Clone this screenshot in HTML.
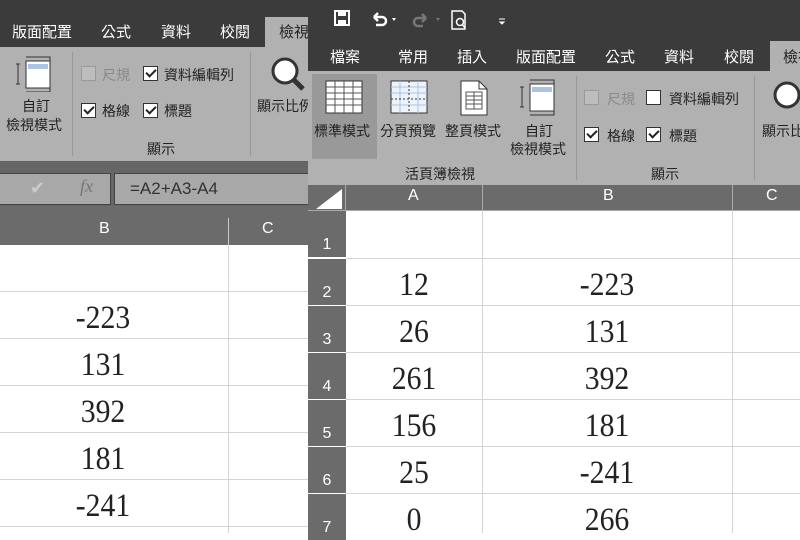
<!DOCTYPE html><html><head><meta charset="utf-8"><style>
*{margin:0;padding:0;box-sizing:border-box}
body{width:800px;height:533px;overflow:hidden;position:relative;background:#fff;font-family:"Liberation Sans","Noto Sans CJK TC",sans-serif}
.a{position:absolute}
.t{position:absolute;color:#fff;font-size:15px;white-space:nowrap}
.k{position:absolute;color:#222;font-size:14px;white-space:nowrap}
.cb{position:absolute;width:15px;height:15px;border:1px solid #333;background:#fff}
.cb.c::after{content:"";position:absolute;left:4px;top:0px;width:4px;height:8px;border:solid #222;border-width:0 2px 2px 0;transform:rotate(45deg)}
.cb.d{border-color:#999;background:#bdbdbd}
.cb.d::after{border-color:#999}
.n{position:absolute;font-family:"Liberation Serif",serif;font-size:33px;color:#222;text-align:center;transform:scaleX(0.9)}
.hl{position:absolute;height:1px;background:#d4d4d4}
.vl{position:absolute;width:1px;background:#d4d4d4}
.rh{position:absolute;left:308px;width:38px;height:46px;background:#6b6b6b;color:#fff;font-size:16px;text-align:center;padding-top:25px}
</style></head><body>
<!-- LEFT -->
<div class="a" style="left:0;top:0;width:308px;height:47px;background:#3b3b3b"></div>
<div class="a" style="left:265px;top:17px;width:43px;height:30px;background:#b1b1b1"></div>
<div class="t" style="left:12px;top:21px">版面配置</div>
<div class="t" style="left:101px;top:21px">公式</div>
<div class="t" style="left:161px;top:21px">資料</div>
<div class="t" style="left:220px;top:21px">校閱</div>
<div class="k" style="left:279px;top:21px;font-size:15px">檢視</div>
<div class="a" style="left:0;top:47px;width:308px;height:114px;background:#b1b1b1"></div>
<div class="a" style="left:72px;top:52px;width:1px;height:104px;background:#999"></div>
<div class="a" style="left:250px;top:52px;width:1px;height:104px;background:#999"></div>
<svg class="a" style="left:16px;top:56px" width="40" height="36"><rect x="10" y="5" width="24" height="27" fill="#fff" stroke="#333"/><rect x="12" y="8" width="20" height="5" fill="#a9c4e4"/><path d="M2 8v20M0 8h4M0 28h4M10 1h24v4M34 32v4H10" stroke="#333" fill="none"/></svg>
<div class="k" style="left:22px;top:96px">自訂</div>
<div class="k" style="left:6px;top:115px">檢視模式</div>
<div class="cb d" style="left:81px;top:66px"></div><div class="k" style="left:102px;top:65px;color:#8a8a8a">尺規</div>
<div class="cb c" style="left:143px;top:66px"></div><div class="k" style="left:164px;top:65px">資料編輯列</div>
<div class="cb c" style="left:81px;top:103px"></div><div class="k" style="left:102px;top:101px">格線</div>
<div class="cb c" style="left:143px;top:103px"></div><div class="k" style="left:164px;top:101px">標題</div>
<div class="k" style="left:147px;top:139px">顯示</div>
<svg class="a" style="left:268px;top:54px" width="40" height="40"><circle cx="17" cy="17" r="12" fill="#fff" stroke="#333" stroke-width="3"/><path d="M26 26l9 9" stroke="#333" stroke-width="5"/></svg>
<div class="k" style="left:257px;top:96px">顯示比例</div>
<div class="a" style="left:0;top:161px;width:308px;height:45px;background:#666"></div>
<div class="a" style="left:-2px;top:173px;width:113px;height:32px;background:#a8a8a8;border:1px solid #444"></div>
<div class="a" style="left:30px;top:178px;color:#ccc;font-size:18px">✔</div>
<div class="a" style="left:80px;top:176px;color:#777;font-family:'Liberation Serif',serif;font-style:italic;font-size:18px">fx</div>
<div class="a" style="left:114px;top:173px;width:200px;height:32px;background:#a8a8a8;border:1px solid #444"></div>
<div class="k" style="left:130px;top:179px;font-size:17px;color:#333">=A2+A3-A4</div>
<div class="a" style="left:0;top:206px;width:308px;height:39px;background:#6b6b6b"></div>
<div class="a" style="left:228px;top:218px;width:1px;height:27px;background:#ccc"></div>
<div class="t" style="left:99px;top:220px;font-size:16px">B</div>
<div class="t" style="left:262px;top:220px;font-size:16px">C</div>
<div class="vl" style="left:228px;top:245px;height:288px"></div>
<div class="hl" style="left:0;top:291px;width:308px"></div>
<div class="hl" style="left:0;top:338px;width:308px"></div>
<div class="hl" style="left:0;top:385px;width:308px"></div>
<div class="hl" style="left:0;top:432px;width:308px"></div>
<div class="hl" style="left:0;top:479px;width:308px"></div>
<div class="hl" style="left:0;top:526px;width:308px"></div>
<div class="n" style="left:0;width:206px;top:300px">-223</div>
<div class="n" style="left:0;width:206px;top:347px">131</div>
<div class="n" style="left:0;width:206px;top:394px">392</div>
<div class="n" style="left:0;width:206px;top:441px">181</div>
<div class="n" style="left:0;width:206px;top:488px">-241</div>
<!-- RIGHT -->
<div class="a" style="left:308px;top:0;width:492px;height:71px;background:#3b3b3b"></div>
<svg class="a" style="left:334px;top:10px" width="180" height="22"><rect x="1" y="1" width="14" height="14" fill="none" stroke="#fff" stroke-width="2"/><rect x="4" y="2" width="8" height="4" fill="#fff"/><rect x="4" y="10" width="8" height="5" fill="#fff"/><path d="M40 7h8a4 4 0 010 8h-6M40 7l4-4M40 7l4 4" stroke="#fff" stroke-width="2.5" fill="none"/><path d="M58 8l2 3 2-3z" fill="#fff"/><path d="M92 8h-8a4 4 0 000 8h5M92 8l-4-4M92 8l-4 4" stroke="#777" stroke-width="2.5" fill="none"/><path d="M102 8l2 3 2-3z" fill="#777"/><path d="M118 1h10l3 3v15h-13z" fill="none" stroke="#fff" stroke-width="1.5"/><circle cx="126" cy="12" r="3.5" fill="none" stroke="#fff" stroke-width="1.5"/><path d="M128 14l3 4" stroke="#fff" stroke-width="1.5"/><path d="M165 9h6M166 12l2 2 2-2z" stroke="#fff" fill="#fff"/></svg>
<div class="a" style="left:770px;top:41px;width:30px;height:30px;background:#b1b1b1"></div>
<div class="t" style="left:330px;top:46px">檔案</div>
<div class="t" style="left:398px;top:46px">常用</div>
<div class="t" style="left:457px;top:46px">插入</div>
<div class="t" style="left:516px;top:46px">版面配置</div>
<div class="t" style="left:605px;top:46px">公式</div>
<div class="t" style="left:664px;top:46px">資料</div>
<div class="t" style="left:724px;top:46px">校閱</div>
<div class="k" style="left:783px;top:46px;font-size:15px">檢視</div>
<div class="a" style="left:308px;top:71px;width:492px;height:114px;background:#b1b1b1"></div>
<div class="a" style="left:312px;top:74px;width:65px;height:85px;background:#999"></div>
<div class="a" style="left:576px;top:76px;width:1px;height:104px;background:#999"></div>
<div class="a" style="left:754px;top:76px;width:1px;height:104px;background:#999"></div>
<svg class="a" style="left:325px;top:80px" width="40" height="34"><rect x="1" y="1" width="36" height="32" fill="#fff" stroke="#333"/><path d="M1 7h36M1 13h36M1 19h36M1 25h36M10 1v32M19 1v32M28 1v32" stroke="#555"/></svg>
<svg class="a" style="left:390px;top:80px" width="40" height="34"><rect x="1" y="1" width="36" height="32" fill="#eef3fb" stroke="#333"/><path d="M1 7h36M1 13h36M1 25h36M10 1v32M28 1v32" stroke="#a9c4e4"/><path d="M1 19h36M19 1v32" stroke="#333" stroke-dasharray="2 2"/></svg>
<svg class="a" style="left:460px;top:80px" width="30" height="36"><path d="M1 1h18l8 8v26H1z" fill="#fff" stroke="#333"/><path d="M19 1v8h8" fill="none" stroke="#333"/><rect x="6" y="12" width="16" height="17" fill="none" stroke="#555"/><path d="M6 16h16M6 20h16M6 24h16M14 12v17" stroke="#555"/></svg>
<svg class="a" style="left:520px;top:78px" width="40" height="38"><rect x="10" y="6" width="24" height="27" fill="#fff" stroke="#333"/><rect x="12" y="9" width="20" height="5" fill="#a9c4e4"/><path d="M2 9v20M0 9h4M0 29h4M10 2h24v4M34 33v4H10" stroke="#333" fill="none"/></svg>
<div class="k" style="left:314px;top:121px">標準模式</div>
<div class="k" style="left:380px;top:121px">分頁預覽</div>
<div class="k" style="left:445px;top:121px">整頁模式</div>
<div class="k" style="left:525px;top:121px">自訂</div>
<div class="k" style="left:510px;top:139px">檢視模式</div>
<div class="k" style="left:405px;top:164px">活頁簿檢視</div>
<div class="cb d" style="left:584px;top:90px"></div><div class="k" style="left:607px;top:89px;color:#8a8a8a">尺規</div>
<div class="cb" style="left:646px;top:90px"></div><div class="k" style="left:669px;top:89px">資料編輯列</div>
<div class="cb c" style="left:584px;top:127px"></div><div class="k" style="left:607px;top:126px">格線</div>
<div class="cb c" style="left:646px;top:127px"></div><div class="k" style="left:669px;top:126px">標題</div>
<div class="k" style="left:651px;top:164px">顯示</div>
<svg class="a" style="left:770px;top:78px" width="30" height="40"><circle cx="17" cy="17" r="12" fill="#fff" stroke="#333" stroke-width="3"/></svg>
<div class="k" style="left:762px;top:121px">顯示比例</div>
<div class="a" style="left:308px;top:185px;width:492px;height:26px;background:#6b6b6b"></div>
<svg class="a" style="left:308px;top:185px" width="38" height="26"><path d="M8 24L34 4v20z" fill="#fff"/></svg>
<div class="a" style="left:345px;top:185px;width:1px;height:26px;background:#aaa"></div>
<div class="a" style="left:482px;top:185px;width:1px;height:26px;background:#aaa"></div>
<div class="a" style="left:732px;top:185px;width:1px;height:26px;background:#aaa"></div>
<div class="a" style="left:308px;top:210px;width:492px;height:1px;background:#aaa"></div>
<div class="t" style="left:408px;top:187px;font-size:16px">A</div>
<div class="t" style="left:603px;top:187px;font-size:16px">B</div>
<div class="t" style="left:766px;top:187px;font-size:16px">C</div>
<div class="vl" style="left:482px;top:211px;height:322px"></div>
<div class="vl" style="left:732px;top:211px;height:322px"></div>
<div class="hl" style="left:346px;top:258px;width:454px"></div>
<div class="hl" style="left:346px;top:305px;width:454px"></div>
<div class="hl" style="left:346px;top:352px;width:454px"></div>
<div class="hl" style="left:346px;top:399px;width:454px"></div>
<div class="hl" style="left:346px;top:446px;width:454px"></div>
<div class="hl" style="left:346px;top:493px;width:454px"></div>
<div class="rh" style="top:211px">1</div>
<div class="rh" style="top:259px">2</div>
<div class="rh" style="top:306px">3</div>
<div class="rh" style="top:353px">4</div>
<div class="rh" style="top:400px">5</div>
<div class="rh" style="top:447px">6</div>
<div class="rh" style="top:494px">7</div>
<div class="n" style="left:346px;width:136px;top:267px">12</div>
<div class="n" style="left:346px;width:136px;top:314px">26</div>
<div class="n" style="left:346px;width:136px;top:361px">261</div>
<div class="n" style="left:346px;width:136px;top:408px">156</div>
<div class="n" style="left:346px;width:136px;top:455px">25</div>
<div class="n" style="left:346px;width:136px;top:502px">0</div>
<div class="n" style="left:482px;width:250px;top:267px">-223</div>
<div class="n" style="left:482px;width:250px;top:314px">131</div>
<div class="n" style="left:482px;width:250px;top:361px">392</div>
<div class="n" style="left:482px;width:250px;top:408px">181</div>
<div class="n" style="left:482px;width:250px;top:455px">-241</div>
<div class="n" style="left:482px;width:250px;top:502px">266</div>
</body></html>
